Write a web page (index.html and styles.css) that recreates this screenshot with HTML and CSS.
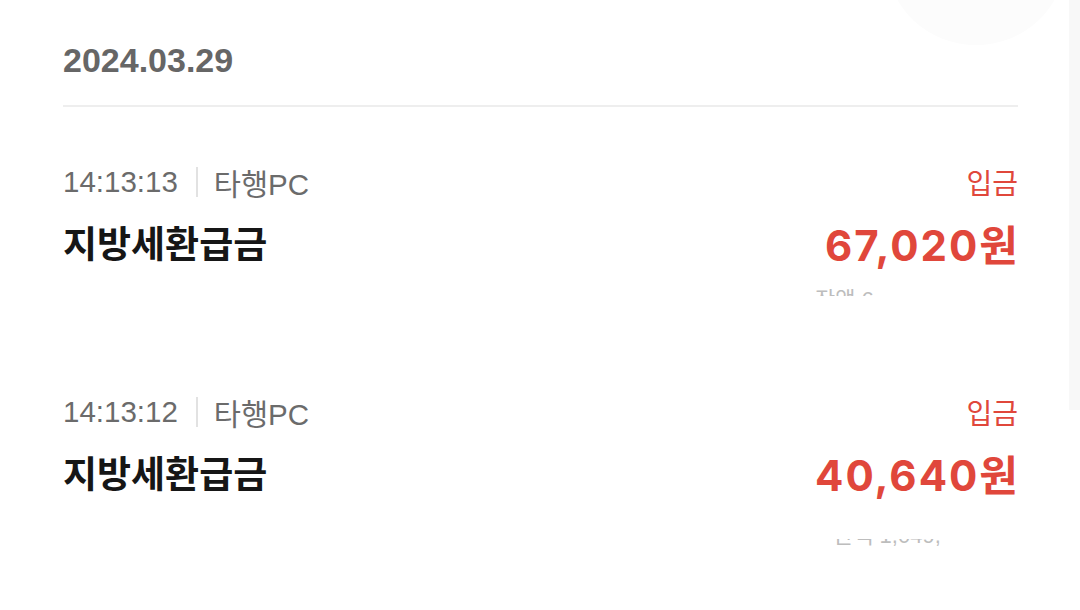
FILE: index.html
```html
<!DOCTYPE html>
<html lang="ko">
  <head>
    <meta charset="UTF-8" />
    <meta name="viewport" content="width=device-width, initial-scale=1" />
    <title>거래내역</title>
    <link rel="stylesheet" href="styles.css">
  </head>
  <body>
    <div class="blob"></div>
    <div class="scroll-track"></div>
    <main id="history">
      <h2 class="date">2024.03.29</h2>

      <div class="item">
        <div class="row meta">
          <div class="meta-left">
            <span class="time">14:13:13</span>
            <span class="divider"></span>
            <span class="channel">타행PC</span>
          </div>
          <span class="kind">입금</span>
        </div>
        <div class="row main">
          <span class="title">지방세환급금</span>
          <span class="amount">67,020원</span>
        </div>
        <div class="balance top-slice">
          <span>잔액 6</span>
        </div>
      </div>

      <div class="item">
        <div class="row meta">
          <div class="meta-left">
            <span class="time">14:13:12</span>
            <span class="divider"></span>
            <span class="channel">타행PC</span>
          </div>
          <span class="kind">입금</span>
        </div>
        <div class="row main">
          <span class="title">지방세환급금</span>
          <span class="amount">40,640원</span>
        </div>
        <div class="balance low-slice">
          <span>잔액 1,049,</span>
        </div>
      </div>
    </main>
  </body>
</html>
```

FILE: styles.css
```css
body {
  margin: 0;
  padding: 0;
  background-color: #fff;
  color: #1a1a1a;
  font-family: "Liberation Sans", "Noto Sans CJK KR", sans-serif;
  overflow: hidden;
}

/* decorative bits in the corner */
.blob {
  position: absolute;
  top: -120px;
  left: 888px;
  width: 176px;
  height: 165px;
  border-radius: 50%;
  background-color: #fcfcfc;
}

.scroll-track {
  position: absolute;
  top: 0;
  right: 0;
  width: 11px;
  height: 410px;
  background-color: #f8f8f8;
}

#history {
  padding: 40px 62px 0 63px;
}

.date {
  margin: 0;
  padding-bottom: 25px;
  border-bottom: 2px solid #eeeeee;
  font-size: 34px;
  line-height: 40px;
  font-weight: bold;
  color: #666;
}

.item {
  padding-top: 57px;
  height: 173px;
}

.row {
  display: flex;
  align-items: center;
  justify-content: space-between;
}

.meta {
  height: 36px;
  font-size: 29.5px;
  color: #6b6b6b;
}

.meta-left {
  display: flex;
  align-items: center;
}

.divider {
  width: 2px;
  height: 30px;
  margin: 0 16px 0 18px;
  background-color: #e2e2e2;
}

.kind {
  color: #e0473b;
  font-size: 28px;
}

.main {
  margin-top: 20px;
  height: 44px;
}

.title {
  font-size: 37px;
  font-weight: bold;
  color: #161616;
}

.amount {
  margin-right: -2px;
  font-family: Inter, "Noto Sans CJK KR", sans-serif;
  font-size: 42px;
  font-weight: bold;
  letter-spacing: 2px;
  color: #e0473b;
}

.balance {
  overflow: hidden;
  color: #bdbdbd;
  font-size: 22px;
  line-height: 22px;
}

.balance.top-slice {
  margin: 25px 0 0 752px;
  height: 7px;
}

.balance.low-slice {
  margin: 45px 0 0 770px;
  height: 7px;
}

.balance.low-slice span {
  display: block;
  margin-top: -14px;
}
```
